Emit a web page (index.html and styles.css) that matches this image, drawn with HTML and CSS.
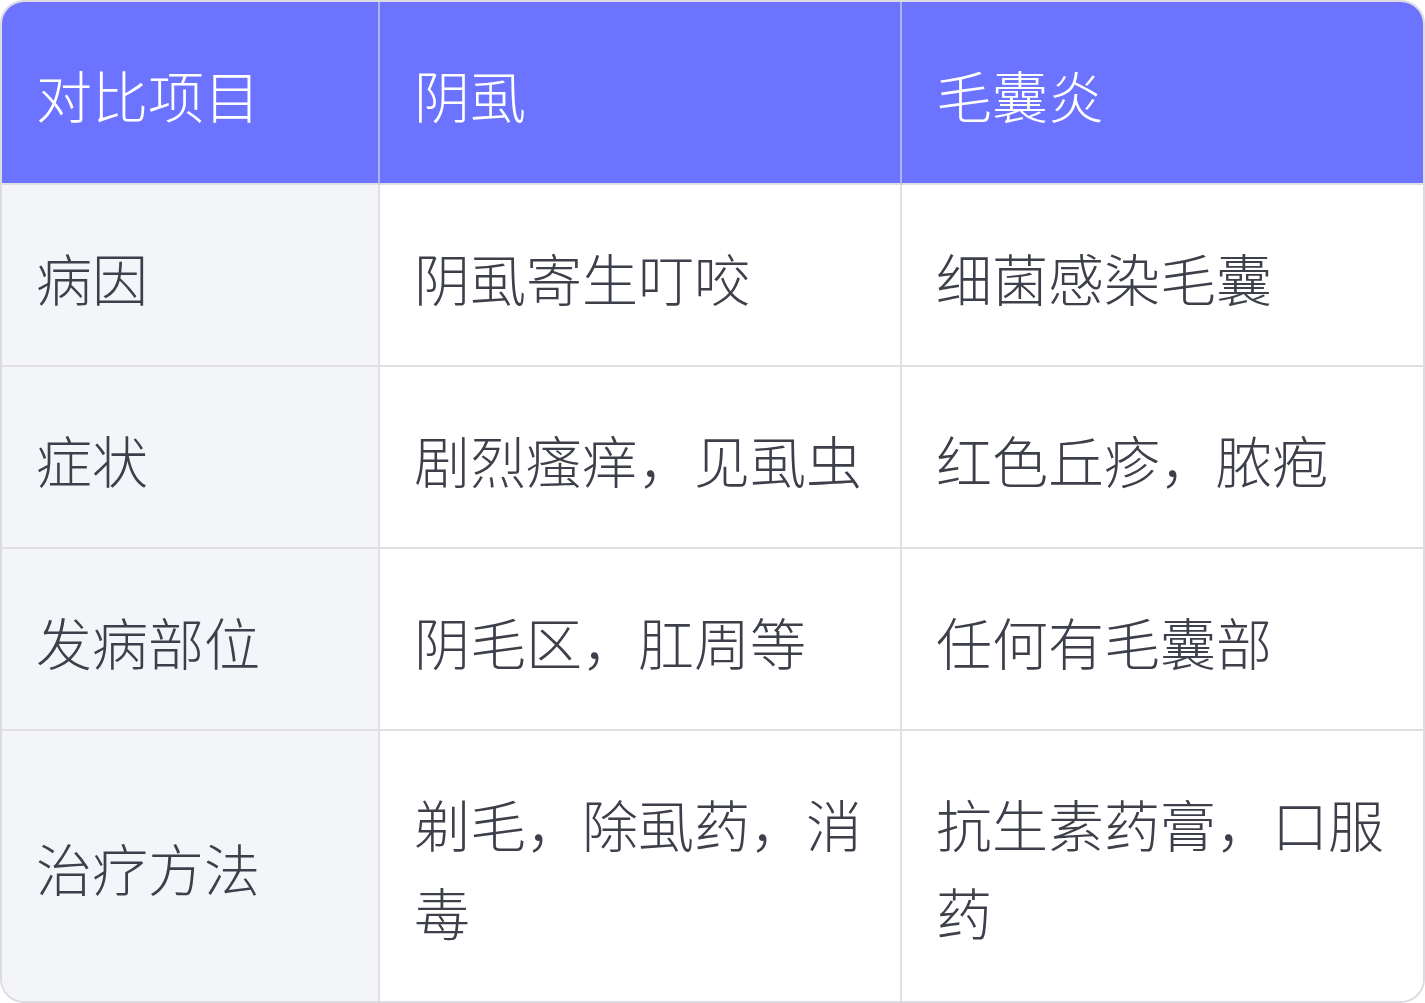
FILE: index.html
```html
<!DOCTYPE html>
<html lang="zh-CN">
<head>
<meta charset="utf-8">
<title>阴虱与毛囊炎对比</title>
<link rel="stylesheet" href="styles.css">
</head>
<body>
<div class="compare">
  <div class="cell head first">对比项目</div>
  <div class="cell head">阴虱</div>
  <div class="cell head last">毛囊炎</div>

  <div class="cell label">病因</div>
  <div class="cell">阴虱寄生叮咬</div>
  <div class="cell last">细菌感染毛囊</div>

  <div class="cell label">症状</div>
  <div class="cell">剧烈瘙痒，见虱虫</div>
  <div class="cell last">红色丘疹，脓疱</div>

  <div class="cell label">发病部位</div>
  <div class="cell">阴毛区，肛周等</div>
  <div class="cell last">任何有毛囊部</div>

  <div class="cell label bottom">治疗方法</div>
  <div class="cell bottom">剃毛，除虱药，消毒</div>
  <div class="cell last bottom">抗生素药膏，口服药</div>
</div>
</body>
</html>
```

FILE: styles.css
```css
* { box-sizing: border-box; }
html, body { margin: 0; padding: 0; background: #ffffff; }
.compare {
  width: 1425px;
  height: 1003px;
  border: 2px solid #dcdce0;
  border-radius: 24px;
  overflow: hidden;
  display: grid;
  grid-template-columns: 378px 522px 1fr;
  grid-template-rows: auto auto auto auto 1fr;
  font-family: "Noto Sans CJK SC", "Noto Sans", sans-serif;
  font-weight: 300;
  font-size: 56px;
  line-height: 88px;
  color: #3d404b;
}
.cell {
  padding: 48px 34px 44px;
  border-right: 2px solid #e0e0e4;
  border-bottom: 2px solid #e0e0e4;
  background: #ffffff;
  display: flex;
  align-items: center;
}
.cell.last { border-right: none; }
.cell.bottom { border-bottom: none; padding-bottom: 46px; }
.cell.head {
  padding-bottom: 45px;
  background: #6c73ff;
  color: #ffffff;
  border-right-color: rgba(255, 255, 255, 0.45);
}
.cell.head.last { border-right: none; }
.cell.label { background: #f4f5f9; }
```
